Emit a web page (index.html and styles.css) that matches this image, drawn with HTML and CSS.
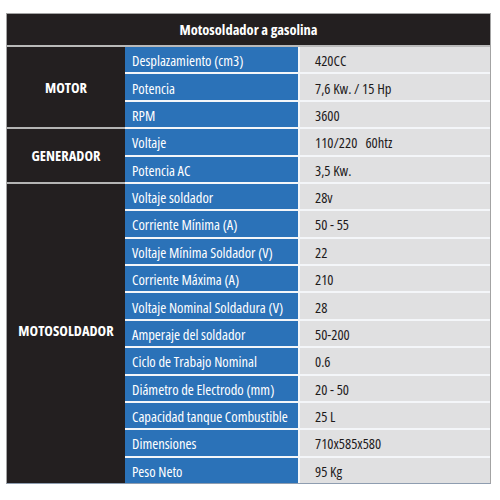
FILE: index.html
```html
<!DOCTYPE html>
<html lang="es">
<head>
<meta charset="utf-8">
<title>Motosoldador a gasolina</title>
<link rel="stylesheet" href="styles.css">
</head>
<body>
<div class="sheet">
  <div class="title">Motosoldador a gasolina</div>
  <div class="body">
    <div class="group">
      <div class="cat">MOTOR</div>
      <div class="rows">
        <div class="row"><div class="lbl">Desplazamiento (cm3)</div><div class="val">420CC</div></div>
        <div class="row"><div class="lbl">Potencia</div><div class="val">7,6 Kw. / 15 Hp</div></div>
        <div class="row"><div class="lbl">RPM</div><div class="val">3600</div></div>
      </div>
    </div>
    <div class="group">
      <div class="cat">GENERADOR</div>
      <div class="rows">
        <div class="row"><div class="lbl">Voltaje</div><div class="val">110/220&nbsp;&nbsp; 60htz</div></div>
        <div class="row"><div class="lbl">Potencia AC</div><div class="val">3,5 Kw.</div></div>
      </div>
    </div>
    <div class="group">
      <div class="cat cat-low">MOTOSOLDADOR</div>
      <div class="rows">
        <div class="row"><div class="lbl">Voltaje soldador</div><div class="val">28v</div></div>
        <div class="row"><div class="lbl">Corriente Mínima (A)</div><div class="val">50 - 55</div></div>
        <div class="row"><div class="lbl">Voltaje Mínima Soldador (V)</div><div class="val">22</div></div>
        <div class="row"><div class="lbl">Corriente Máxima (A)</div><div class="val">210</div></div>
        <div class="row"><div class="lbl">Voltaje Nominal Soldadura (V)</div><div class="val">28</div></div>
        <div class="row"><div class="lbl">Amperaje del soldador</div><div class="val">50-200</div></div>
        <div class="row"><div class="lbl">Ciclo de Trabajo Nominal</div><div class="val">0.6</div></div>
        <div class="row"><div class="lbl">Diámetro de Electrodo (mm)</div><div class="val">20 - 50</div></div>
        <div class="row"><div class="lbl">Capacidad tanque Combustible</div><div class="val">25 L</div></div>
        <div class="row"><div class="lbl">Dimensiones</div><div class="val">710x585x580</div></div>
        <div class="row"><div class="lbl">Peso Neto</div><div class="val">95 Kg</div></div>
      </div>
    </div>
  </div>
</div>
</body>
</html>
```
FILE: styles.css
```css
html, body {
  margin: 0;
  padding: 0;
  background: #ffffff;
}
body {
  padding: 13px 0 0 6px;
  font-family: "Open Sans", "Roboto", "Liberation Sans", sans-serif;
  font-stretch: 75%;
}
.sheet {
  width: 483px;
  border: 1px solid #a3a3a3;
  border-bottom-color: #8e9db0;
  background: #ffffff;
}
.title {
  height: 31px;
  background: #231f20;
  color: #ffffff;
  font-weight: bold;
  font-size: 14.5px;
  display: flex;
  align-items: center;
  justify-content: center;
  border-bottom: 2px solid #b9b9b9;
}
.body {
  display: flex;
  flex-direction: column;
  gap: 2px;
  background: linear-gradient(to right, #b4b4b4 0, #b4b4b4 118px, #f4f6f9 118px);
}
.group {
  display: grid;
  grid-template-columns: 118px 1fr;
}
.cat {
  background: #231f20;
  color: #ffffff;
  font-weight: 700;
  font-size: 14.5px;
  display: flex;
  align-items: center;
  justify-content: center;
}
.cat-low {
  padding-bottom: 6px;
}
.rows {
  display: flex;
  flex-direction: column;
  gap: 2px;
  background: #f4f6f9;
}
.row {
  height: 25.375px;
  display: grid;
  grid-template-columns: 173px 190px;
  column-gap: 2px;
  font-size: 14.5px;
  font-weight: 500;
}
.lbl {
  background: #2b72b8;
  color: #ffffff;
  display: flex;
  align-items: center;
  padding: 2px 0 0 7px;
  white-space: nowrap;
  overflow: hidden;
}
.val {
  background: #e0e0e1;
  color: #1e1a1b;
  display: flex;
  align-items: center;
  padding: 2px 0 0 15px;
  white-space: nowrap;
}
```
